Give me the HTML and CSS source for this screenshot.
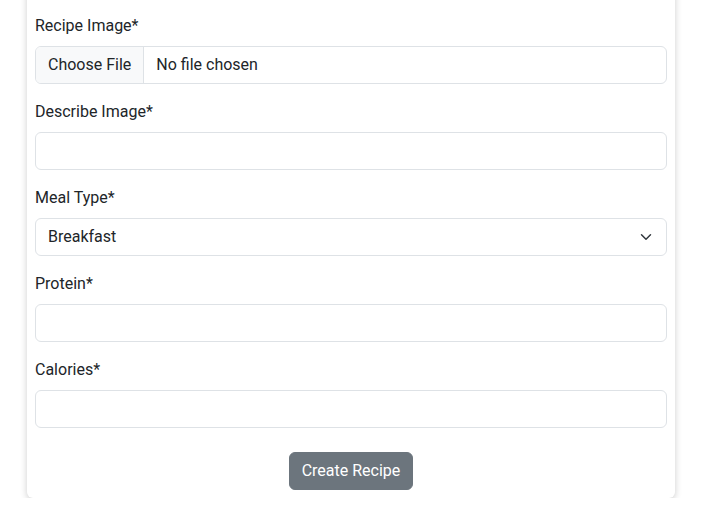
FILE: index.html
```html
<!DOCTYPE html>
<html lang="en">
<head>
<meta charset="utf-8">
<title>Create Recipe</title>
<link rel="stylesheet" href="styles.css">
</head>
<body>
<div class="card">
  <form class="card-body">
    <div class="group">
      <label class="label" for="img">Recipe Image*</label>
      <input class="control file" type="file" id="img">
    </div>
    <div class="group">
      <label class="label" for="desc">Describe Image*</label>
      <input class="control" type="text" id="desc">
    </div>
    <div class="group">
      <label class="label" for="meal">Meal Type*</label>
      <select class="control select" id="meal">
        <option>Breakfast</option>
        <option>Lunch</option>
        <option>Dinner</option>
      </select>
    </div>
    <div class="group">
      <label class="label" for="protein">Protein*</label>
      <input class="control" type="text" id="protein">
    </div>
    <div class="group">
      <label class="label" for="cal">Calories*</label>
      <input class="control" type="text" id="cal">
    </div>
    <div class="actions">
      <button class="btn" type="button">Create Recipe</button>
    </div>
  </form>
</div>
</body>
</html>
```

FILE: styles.css
```css
* { box-sizing: border-box; }
html, body { margin: 0; padding: 0; background: #fff; }
body {
  font-family: Roboto, "Liberation Sans", sans-serif;
  font-size: 16px;
  line-height: 1.5;
  color: #212529;
}
.card {
  width: 648px;
  margin: -20px 0 0 27px;
  background: #fff;
  border-radius: 6px;
  box-shadow: 0 2px 7px rgba(0, 0, 0, 0.2);
}
.card-body {
  padding: 34px 8px 8px 8px;
  margin: 0;
}
.group { margin-bottom: 16px; }
.label {
  display: block;
  margin-bottom: 8px;
  line-height: 24px;
}
.control {
  display: block;
  width: 100%;
  height: 38px;
  padding: 6px 12px;
  font-family: inherit;
  font-size: 16px;
  line-height: 24px;
  color: #212529;
  background: #fff;
  border: 1px solid #dee2e6;
  border-radius: 6px;
  outline: none;
  appearance: none;
  -webkit-appearance: none;
  margin: 0;
}
.file {
  overflow: hidden;
  height: auto;
}
.file::file-selector-button {
  padding: 6px 12px;
  margin: -6px 12px -6px -12px;
  font-family: inherit;
  font-size: 16px;
  line-height: 24px;
  color: #212529;
  background: #f8f9fa;
  border: 0;
  border-right: 1px solid #dee2e6;
  border-radius: 0;
}
.select {
  padding-right: 36px;
  background-image: url("data:image/svg+xml,%3csvg xmlns='http://www.w3.org/2000/svg' viewBox='0 0 16 16'%3e%3cpath fill='none' stroke='%23343a40' stroke-linecap='round' stroke-linejoin='round' stroke-width='2' d='m2 5 6 6 6-6'/%3e%3c/svg%3e");
  background-repeat: no-repeat;
  background-position: right 12px center;
  background-size: 16px 12px;
}
.actions {
  display: flex;
  justify-content: center;
  padding-top: 8px;
}
.btn {
  font-family: inherit;
  font-size: 16px;
  line-height: 24px;
  padding: 6px 12px;
  color: #fff;
  background: #6c757d;
  border: 1px solid #6c757d;
  border-radius: 6px;
}
```
